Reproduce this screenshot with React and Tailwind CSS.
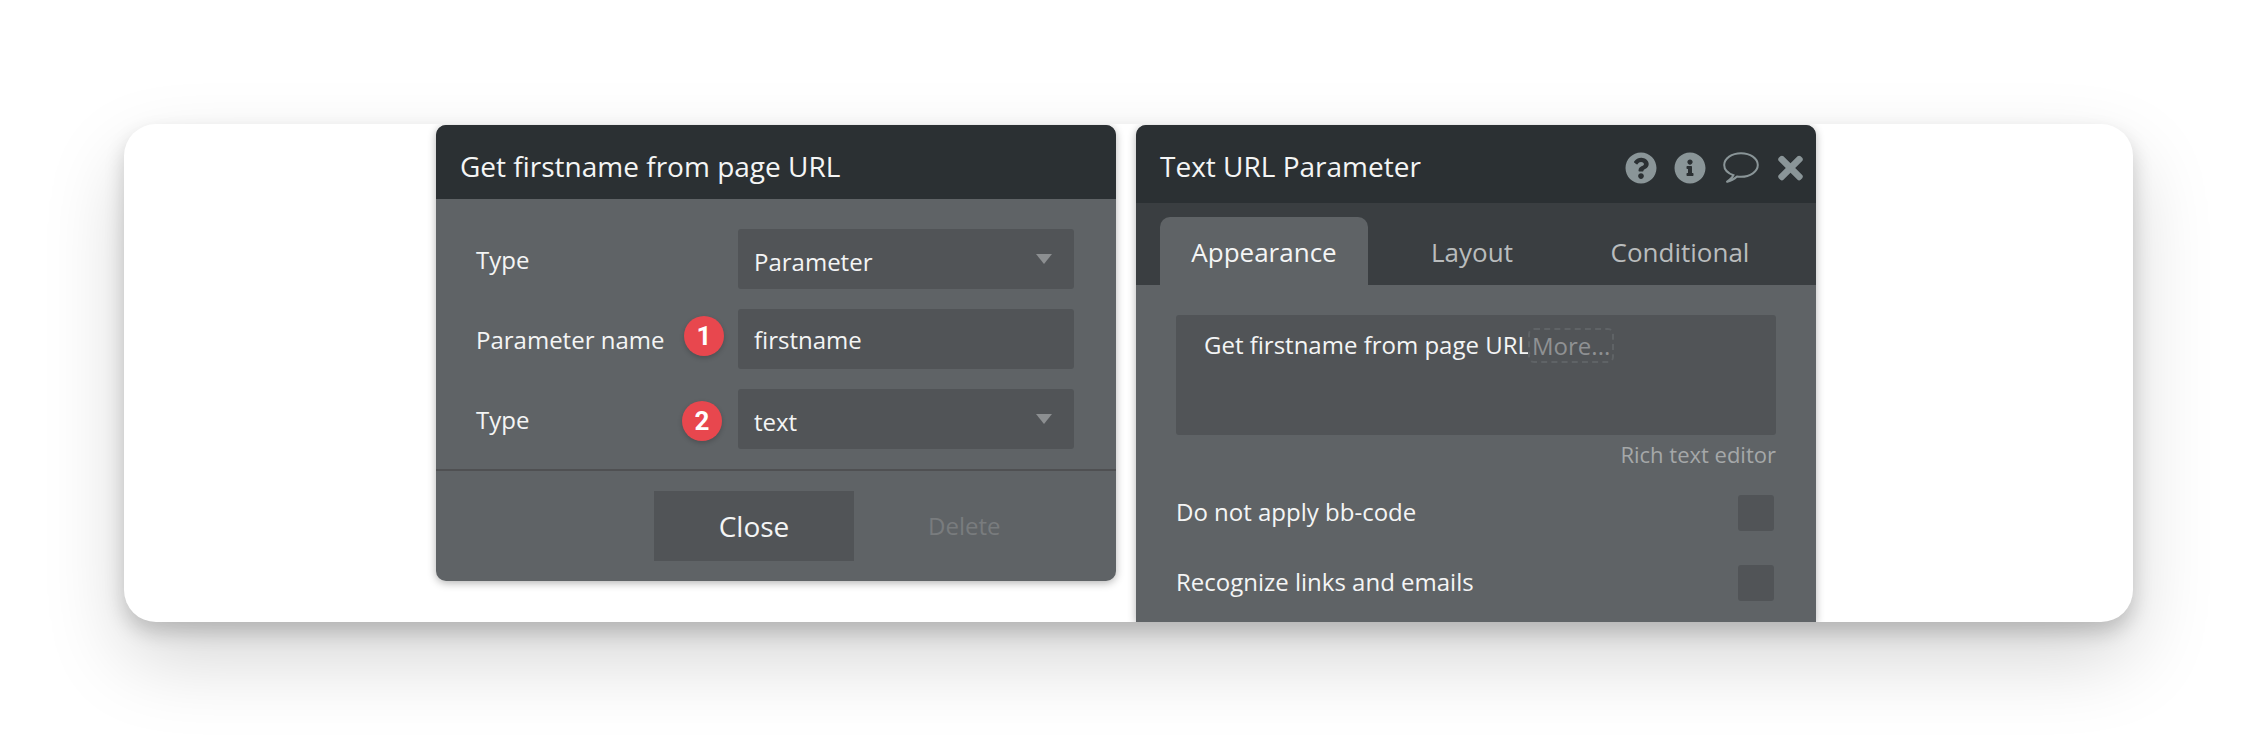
import { FaQuestionCircle, FaInfoCircle, FaTimes } from "react-icons/fa";

const Caret = () => (
  <span className="w-0 h-0 border-x-[8px] border-x-transparent border-t-[10px] border-t-[#8c8f91]" />
);

const Badge = ({ className, children }) => (
  <span
    className={`absolute flex items-center justify-center w-10 h-10 rounded-full bg-[#e8474e] text-white text-[26px] font-bold font-['Roboto',sans-serif] shadow-[0_2px_5px_rgba(0,0,0,0.2)] ${className}`}
  >
    {children}
  </span>
);

const Field = ({ label, value, select, badge }) => (
  <div className="relative flex items-center h-[60px]">
    <span className="w-[262px] pt-px text-[24px] text-[#f4f5f5] leading-none">{label}</span>
    {badge}
    <div className="flex items-center justify-between w-[336px] h-[60px] pl-4 pr-[22px] rounded-[3px] bg-[#515457] text-[24px] text-[#f4f5f5]">
      {select ? <span className="pt-[5px]">{value}</span> : <span className="pt-0.5">{value}</span>}
      {select && <Caret />}
    </div>
  </div>
);

const Check = ({ label, className }) => (
  <div className={`flex items-center justify-between pl-10 pr-[42px] text-[24px] text-[#f4f5f5] ${className}`}>
    <span className="-mt-0.5">{label}</span>
    <span className="w-9 h-9 rounded-[3px] bg-[#515457]" />
  </div>
);

const App = () => {
  return (
    <div className="w-full h-[745px] overflow-hidden bg-white pt-[124px] pl-[124px] font-['Open_Sans',sans-serif]">
      <div className="flex gap-5 w-[2009px] h-[498px] pl-[312px] pt-px overflow-hidden rounded-[32px] bg-white shadow-[0_10px_20px_rgba(0,0,0,0.18),0_36px_80px_rgba(0,0,0,0.17)]">
        {/* action panel */}
        <div className="w-[680px] h-[456px] rounded-[10px] overflow-hidden bg-[#5f6366] shadow-[0_2px_8px_rgba(0,0,0,0.3)]">
          <div className="flex items-center h-[74px] pl-6 pt-[7px] bg-[#2b3033] text-[28px] text-[#f4f5f5]">
            Get firstname from page URL
          </div>
          <div className="flex flex-col gap-5 px-10 pt-[30px] pb-5 border-b-2 border-[#4f5052]">
            <Field label="Type" value="Parameter" select />
            <Field
              label="Parameter name"
              value="firstname"
              badge={<Badge className="left-[208px] top-[7px]">1</Badge>}
            />
            <Field
              label="Type"
              value="text"
              select
              badge={<Badge className="left-[206px] top-[12px]">2</Badge>}
            />
          </div>
          <div className="flex items-center pl-[218px] pt-5">
            <button className="w-[200px] h-[70px] bg-[#515457] text-[28px] text-[#f4f5f5]">Close</button>
            <span className="ml-[74px] text-[24px] text-[#797c7e]">Delete</span>
          </div>
        </div>

        {/* property editor */}
        <div className="w-[680px] bg-[#5f6366] rounded-t-[10px] overflow-hidden shadow-[0_2px_8px_rgba(0,0,0,0.3)]">
          <div className="flex items-center h-[78px] pl-6 bg-[#2b3033] text-[28px] text-[#f4f5f5]">
            <span className="pt-[3px]">Text URL Parameter</span>
            <div className="flex items-center ml-auto pr-[13px] pt-[7px] text-[#8a9598]">
              <FaQuestionCircle className="w-8 h-8" />
              <FaInfoCircle className="w-8 h-8 ml-[17px]" />
              <svg viewBox="0 0 36 31" className="w-9 h-[31px] ml-[17px]" fill="none" stroke="currentColor" strokeWidth="2">
                <path d="M10.5 23.2C5 21.3 1.2 17.6 1.2 13 1.2 6.5 8.8 1.2 18 1.2s16.8 5.3 16.8 11.8S27.2 24.8 18 24.8c-1.5 0-2.8-.1-4-.3-2.5 2.5-6 4.5-10.5 5.5 3-2 6-4 7-6.8z" />
              </svg>
              <FaTimes className="w-[25px] h-9 ml-[19px]" />
            </div>
          </div>
          <div className="flex items-end h-[82px] pl-6 bg-[#3a3e41] text-[26px] text-[#b9bcbd]">
            <div className="flex items-center justify-center w-[208px] h-[68px] pt-0.5 rounded-t-[10px] bg-[#5f6366] text-[#f4f5f5]">
              Appearance
            </div>
            <div className="flex items-center justify-center w-[208px] h-[68px] pt-0.5">Layout</div>
            <div className="flex items-center justify-center w-[208px] h-[68px] pt-0.5">Conditional</div>
          </div>
          <div className="pt-[30px]">
            <div className="mx-10 h-[120px] pl-7 pt-3 rounded-[3px] bg-[#515457] text-[24px] text-[#f4f5f5]">
              <div className="flex items-center">
                <span>Get firstname from page URL</span>
                <span className="-ml-0.5 px-0.5 rounded-md border-2 border-dashed border-[#5f6366] text-[#8f9193] leading-[31px]">
                  More...
                </span>
              </div>
            </div>
            <div className="mt-1 pr-10 text-right text-[22px] leading-[30px] text-[#a5a8a9]">Rich text editor</div>
            <Check label="Do not apply bb-code" className="mt-[26px]" />
            <Check label="Recognize links and emails" className="mt-[34px]" />
          </div>
        </div>
      </div>
    </div>
  );
};

export default App;
